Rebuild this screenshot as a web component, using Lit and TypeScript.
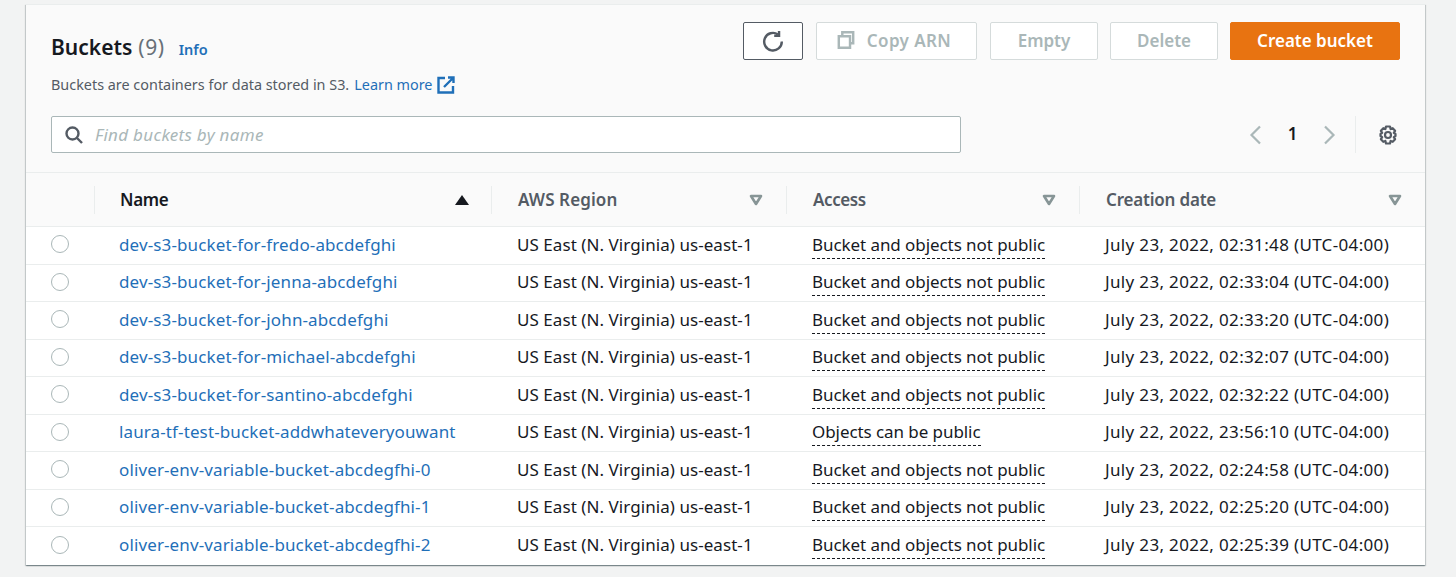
import { LitElement, html, css, svg } from 'lit';
import { customElement } from 'lit/decorators.js';

const NOT_PUBLIC = 'Bucket and objects not public';
const REGION = 'US East (N. Virginia) us-east-1';

const buckets = [
  { name: 'dev-s3-bucket-for-fredo-abcdefghi', access: NOT_PUBLIC, date: 'July 23, 2022, 02:31:48 (UTC-04:00)' },
  { name: 'dev-s3-bucket-for-jenna-abcdefghi', access: NOT_PUBLIC, date: 'July 23, 2022, 02:33:04 (UTC-04:00)' },
  { name: 'dev-s3-bucket-for-john-abcdefghi', access: NOT_PUBLIC, date: 'July 23, 2022, 02:33:20 (UTC-04:00)' },
  { name: 'dev-s3-bucket-for-michael-abcdefghi', access: NOT_PUBLIC, date: 'July 23, 2022, 02:32:07 (UTC-04:00)' },
  { name: 'dev-s3-bucket-for-santino-abcdefghi', access: NOT_PUBLIC, date: 'July 23, 2022, 02:32:22 (UTC-04:00)' },
  { name: 'laura-tf-test-bucket-addwhateveryouwant', access: 'Objects can be public', date: 'July 22, 2022, 23:56:10 (UTC-04:00)' },
  { name: 'oliver-env-variable-bucket-abcdegfhi-0', access: NOT_PUBLIC, date: 'July 23, 2022, 02:24:58 (UTC-04:00)' },
  { name: 'oliver-env-variable-bucket-abcdegfhi-1', access: NOT_PUBLIC, date: 'July 23, 2022, 02:25:20 (UTC-04:00)' },
  { name: 'oliver-env-variable-bucket-abcdegfhi-2', access: NOT_PUBLIC, date: 'July 23, 2022, 02:25:39 (UTC-04:00)' },
];

const filterIcon = svg`<svg width="14" height="12" viewBox="0 0 14 12"><path d="M2 2h10L7 10z" fill="#fafafa" stroke="#879596" stroke-width="2.6" stroke-linejoin="round"/></svg>`;

@customElement('app-root')
export class AppRoot extends LitElement {
  static styles = css`
    :host {
      display: block;
      height: 577px;
      overflow: hidden;
      box-sizing: border-box;
      padding: 4px 31px 0 26px;
      background: #f2f3f3;
      font-family: 'Noto Sans', 'Open Sans', sans-serif;
      font-size: 17px;
      color: #16191f;
    }
    .card {
      width: 1399px;
      background: #fff;
      box-shadow: 0 1px 1px 0 rgba(0, 28, 36, 0.3), 1px 1px 1px 0 rgba(0, 28, 36, 0.15), -1px 1px 1px 0 rgba(0, 28, 36, 0.15);
    }
    .head {
      height: 169px;
      box-sizing: border-box;
      padding: 17px 25px 0;
      background: #fafafa;
      border-top: 1px solid #eaeded;
      border-bottom: 1px solid #eaeded;
    }
    .top {
      display: flex;
      justify-content: space-between;
      height: 94px;
    }
    .title {
      display: flex;
      align-items: baseline;
      padding-top: 10px;
      font-size: 21px;
      line-height: 30px;
    }
    .title b {
      font-weight: 600;
    }
    .count {
      color: #687078;
      margin-left: 6px;
      letter-spacing: 0.6px;
    }
    .info {
      margin-left: 14px;
      font-size: 14.5px;
      font-weight: 600;
      color: #1f6fb8;
    }
    .actions {
      display: flex;
      gap: 12px;
    }
    .btn {
      display: flex;
      align-items: center;
      justify-content: center;
      box-sizing: border-box;
      height: 38px;
      padding-bottom: 2px;
      border: 1px solid #d5dbdb;
      border-radius: 2px;
      background: #fff;
      color: #aab7b8;
      font-size: 17px;
      font-weight: 600;
    }
    .refresh {
      width: 60px;
      margin-right: 1px;
      padding-bottom: 0;
      border-color: #545b64;
    }
    .copy {
      width: 161px;
      gap: 12px;
      margin-right: 1px;
      padding-right: 5px;
      letter-spacing: 0.4px;
    }
    .empty { width: 108px; }
    .delete { width: 108px; }
    .create {
      width: 170px;
      background: #e87311;
      border-color: #e87311;
      color: #fff;
    }
    .sub {
      margin-top: 10px;
      font-size: 14.4px;
      line-height: 22px;
      color: #545b64;
      display: flex;
      align-items: center;
    }
    .sub a {
      color: #1f6fb8;
      margin-left: 5px;
    }
    .sub svg {
      margin-left: 5px;
    }
    .tools {
      display: flex;
      align-items: center;
      justify-content: space-between;
    }
    .search {
      display: flex;
      align-items: center;
      box-sizing: border-box;
      width: 910px;
      height: 37px;
      padding-left: 13px;
      gap: 12px;
      background: #fff;
      border: 1px solid #aab7b8;
      border-radius: 2px;
      color: #aab7b8;
      font-style: italic;
      letter-spacing: 0.3px;
    }
    .pager {
      display: flex;
      align-items: center;
      height: 37px;
      margin-right: 2px;
    }
    .page {
      width: 61px;
      text-align: center;
      font-weight: 600;
      padding-bottom: 3px;
    }
    .sep {
      width: 1px;
      height: 37px;
      margin: 0 22px 0 19px;
      background: #eaeded;
    }
    .row {
      display: grid;
      grid-template-columns: 68px 397px 295px 293px 346px;
      align-items: center;
    }
    .thead {
      height: 54px;
      background: #fafafa;
      border-bottom: 1px solid #eaeded;
      box-sizing: border-box;
      font-weight: 600;
      color: #545b64;
    }
    .th {
      display: flex;
      align-items: center;
      justify-content: space-between;
      height: 28px;
      box-sizing: border-box;
      padding: 0 23px 1px 26px;
      border-left: 1px solid #eaeded;
    }
    .th.sel {
      border: 0;
    }
    .th.name {
      color: #16191f;
      padding: 0 22px 1px 25px;
      letter-spacing: -0.3px;
    }
    .th.region {
      letter-spacing: 0.1px;
    }
    .th.acc {
      letter-spacing: -0.4px;
    }
    .th.created {
      letter-spacing: -0.2px;
    }
    .th svg {
      margin-top: 1px;
    }
    .tbody .row {
      height: 37.5px;
      box-sizing: border-box;
      border-bottom: 1px solid #eaeded;
    }
    .tbody .row:last-child {
      border-bottom: 0;
    }
    .radio {
      box-sizing: border-box;
      width: 18px;
      height: 18px;
      margin: 0 0 2px 25px;
      border: 1px solid #aab7b8;
      border-radius: 50%;
      background: #fff;
    }
    .td {
      padding: 0 0 2px 26px;
      white-space: nowrap;
    }
    .bucket {
      padding-left: 25px;
      letter-spacing: 0.12px;
    }
    .bucket a {
      color: #1f6fb8;
    }
    .td.region {
      letter-spacing: 0.06px;
    }
    .access {
      letter-spacing: -0.07px;
    }
    .access span {
      border-bottom: 1px dashed #16191f;
      padding-bottom: 2px;
    }
    .date {
      letter-spacing: 0.34px;
    }
  `;

  render() {
    return html`
      <div class="card">
        <div class="head">
          <div class="top">
            <div>
              <div class="title">
                <b>Buckets</b><span class="count">(9)</span><span class="info">Info</span>
              </div>
              <div class="sub">
                Buckets are containers for data stored in S3.<a>Learn more</a>
                <svg width="18" height="18" viewBox="0 0 18 18" fill="none" stroke="#1f6fb8" stroke-width="2.4">
                  <path d="M8 2H1.500v14.500H16V10M7 11l9-9M11 1.500h5.500V7"/>
                </svg>
              </div>
            </div>
            <div class="actions">
              <div class="btn refresh">
                <svg width="22" height="22" viewBox="0 0 20 20" fill="none" stroke="#545b64" stroke-width="2.2">
                  <path d="M14.500 4A8 8 0 1 0 18 10.500"/><path d="M15.500 0.800v4.400h-4.400"/>
                </svg>
              </div>
              <div class="btn copy">
                <svg width="18" height="18" viewBox="0 0 16 17" fill="none" stroke="#aab7b8" stroke-width="2.3">
                  <path d="M4.500 4.500V1.200h10.300v10.300h-3"/><path d="M1.200 5h10.600v10.800H1.200z"/>
                </svg>
                Copy ARN
              </div>
              <div class="btn empty">Empty</div>
              <div class="btn delete">Delete</div>
              <div class="btn create">Create bucket</div>
            </div>
          </div>
          <div class="tools">
            <div class="search">
              <svg width="18" height="18" viewBox="0 0 18 18" fill="none" stroke="#545b64" stroke-width="2.400">
                <circle cx="7.500" cy="7.500" r="6"/><path d="M12 12l5 5"/>
              </svg>
              Find buckets by name
            </div>
            <div class="pager">
              <svg width="13" height="20" viewBox="0 0 13 20" fill="none" stroke="#aab7b8" stroke-width="2.200"><path d="M11 1.500L2.500 10l8.500 8.500"/></svg>
              <span class="page">1</span>
              <svg width="13" height="20" viewBox="0 0 13 20" fill="none" stroke="#aab7b8" stroke-width="2.200"><path d="M2 1.500l8.500 8.500L2 18.500"/></svg>
              <span class="sep"></span>
              <svg width="20" height="20" viewBox="0 0 20 20" fill="none" stroke="#545b64" stroke-width="2.200">
                <circle cx="10" cy="10" r="3"/>
                <path d="M8 1.500h4l.6 2.600 2.100-.9 2.400 2.600-1.300 2 1.700 1.200v2l-1.700 1.200 1.300 2-2.400 2.600-2.100-.9-.6 2.600H8l-.6-2.600-2.100.9-2.400-2.600 1.300-2L2.500 11V9l1.700-1.200-1.300-2 2.400-2.600 2.100.9z" stroke-linejoin="round"/>
              </svg>
            </div>
          </div>
        </div>
        <div class="row thead">
          <div class="th sel"></div>
          <div class="th name">Name
            <svg width="14" height="10" viewBox="0 0 14 10"><path d="M7 0l7 10H0z" fill="#16191f"/></svg>
          </div>
          <div class="th region">AWS Region ${filterIcon}</div>
          <div class="th acc">Access ${filterIcon}</div>
          <div class="th created">Creation date ${filterIcon}</div>
        </div>
        <div class="tbody">
          ${buckets.map(
            (b) => html`
              <div class="row">
                <div class="radio"></div>
                <div class="td bucket"><a>${b.name}</a></div>
                <div class="td region">${REGION}</div>
                <div class="td access"><span>${b.access}</span></div>
                <div class="td date">${b.date}</div>
              </div>
            `,
          )}
        </div>
      </div>
    `;
  }
}
